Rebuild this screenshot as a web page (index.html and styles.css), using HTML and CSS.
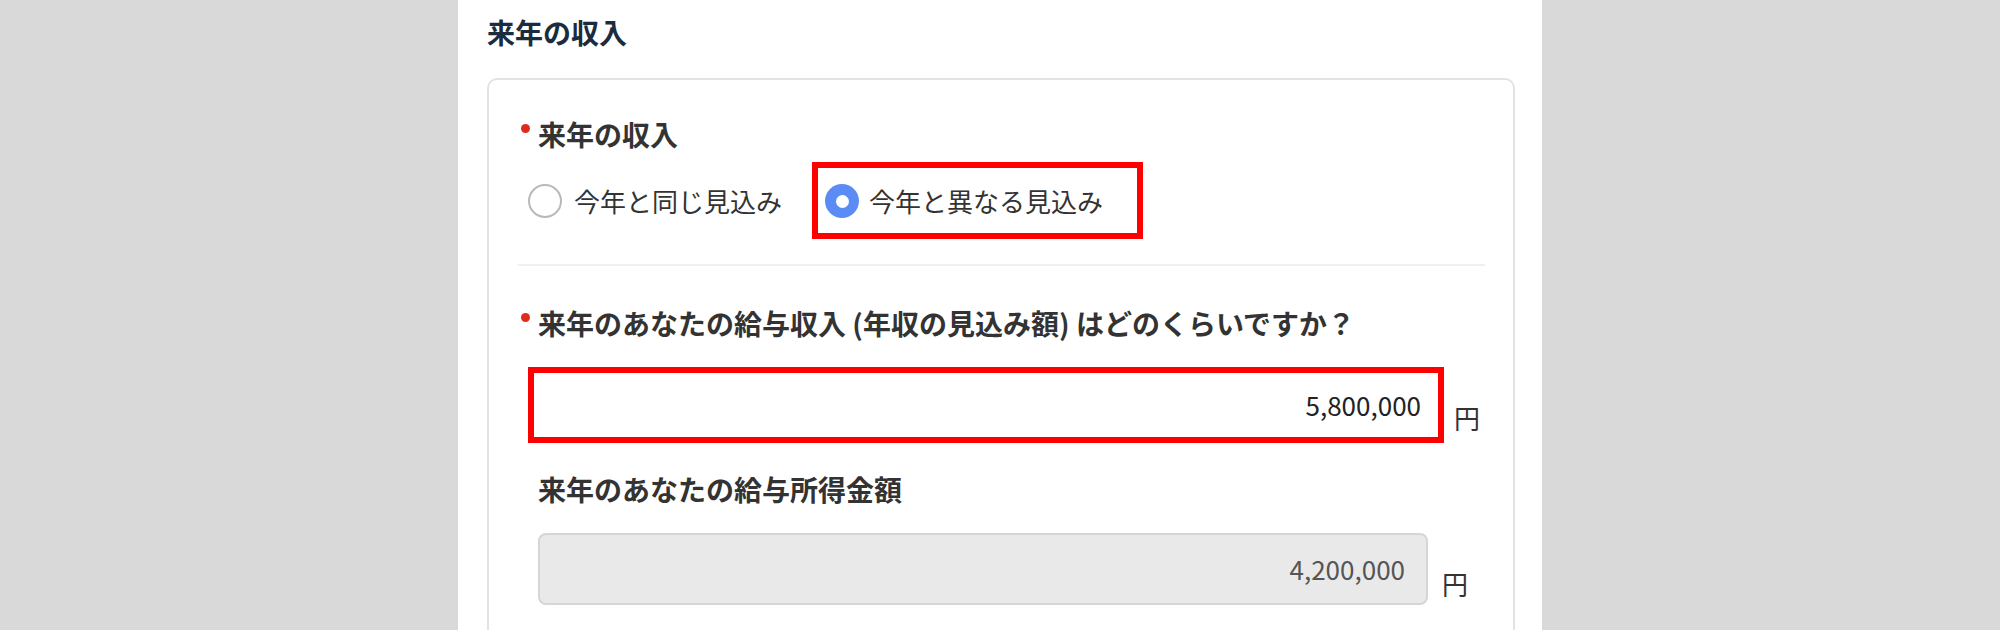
FILE: index.html
```html
<!DOCTYPE html>
<html lang="ja">
<head>
<meta charset="utf-8">
<title>来年の収入</title>
<link rel="stylesheet" href="styles.css">
</head>
<body>
<div class="page">
  <h2 class="title">来年の収入</h2>
  <div class="card">
    <div class="label required">来年の収入</div>
    <div class="radio-row">
      <label class="radio">
        <span class="circle"></span>
        <span class="radio-text">今年と同じ見込み</span>
      </label>
      <label class="radio radio-marked">
        <span class="circle checked"></span>
        <span class="radio-text">今年と異なる見込み</span>
      </label>
    </div>
    <div class="divider"></div>
    <div class="label required q-label">来年のあなたの給与収入 (年収の見込み額) はどのくらいですか？</div>
    <div class="field-row">
      <div class="input input-marked">5,800,000</div>
      <span class="unit unit-first">円</span>
    </div>
    <div class="label sub-label">来年のあなたの給与所得金額</div>
    <div class="field-row">
      <div class="input input-disabled">4,200,000</div>
      <span class="unit unit-second">円</span>
    </div>
  </div>
</div>
</body>
</html>
```
FILE: styles.css
```css
html, body {
  margin: 0;
  padding: 0;
}
body {
  background: #d9d9d9;
  font-family: "Noto Sans CJK JP", "Noto Sans", sans-serif;
  color: #333;
}
.page {
  width: 1084px;
  height: 630px;
  margin: 0 auto;
  background: #fff;
  box-sizing: border-box;
  padding: 12px 27px 0 29px;
  overflow: hidden;
}
.title {
  margin: 0 0 26px;
  font-size: 28px;
  line-height: 40px;
  font-weight: bold;
  color: #1b2c3e;
}
.card {
  border: 2px solid #e3e3e3;
  border-radius: 10px;
  padding: 34px 28px 40px 29px;
  min-height: 600px;
}
.label {
  position: relative;
  font-size: 28px;
  line-height: 40px;
  font-weight: bold;
  color: #333;
  padding-left: 20px;
}
.required::before {
  content: "";
  position: absolute;
  left: 3px;
  top: 10px;
  width: 9px;
  height: 9px;
  border-radius: 50%;
  background: #e02a1b;
}
.radio-row {
  display: flex;
  align-items: center;
  margin-top: 8px;
  padding-left: 10px;
}
.radio {
  display: flex;
  align-items: center;
  gap: 12px;
}
.radio-marked {
  margin-left: 30px;
  border: 6px solid #ff0000;
  padding: 16px 34px 15px 7px;
  gap: 10px;
}
.circle {
  width: 34px;
  height: 34px;
  box-sizing: border-box;
  border: 2px solid #b9b9b9;
  border-radius: 50%;
  background: #fff;
  flex: none;
  display: flex;
  align-items: center;
  justify-content: center;
}
.circle.checked {
  border: none;
  background: #5b8cf6;
}
.circle.checked::after {
  content: "";
  width: 13px;
  height: 13px;
  border-radius: 50%;
  background: #fff;
}
.radio-text {
  font-size: 26px;
  line-height: 34px;
  color: #333;
}
.divider {
  margin-top: 25px;
  height: 2px;
  background: #f0f0f0;
}
.q-label {
  margin-top: 37px;
}
.field-row {
  display: flex;
  align-items: flex-end;
  margin-top: 24px;
}
.input {
  box-sizing: border-box;
  display: flex;
  align-items: center;
  justify-content: flex-end;
  font-size: 26px;
  line-height: 34px;
  color: #222;
}
.input-marked {
  margin-left: 10px;
  width: 916px;
  height: 76px;
  border: 6px solid #ff0000;
  background: #fff;
  padding-right: 17px;
}
.input-disabled {
  margin-left: 20px;
  width: 890px;
  height: 72px;
  border: 2px solid #d6d6d6;
  border-radius: 8px;
  background: #e9e9e9;
  color: #555;
  padding-right: 21px;
}
.unit {
  font-size: 26px;
  line-height: 30px;
  color: #333;
}
.unit-first {
  margin-left: 10px;
  margin-bottom: 10px;
}
.unit-second {
  margin-left: 14px;
  margin-bottom: 6px;
}
.sub-label {
  margin-top: 26px;
}
```
